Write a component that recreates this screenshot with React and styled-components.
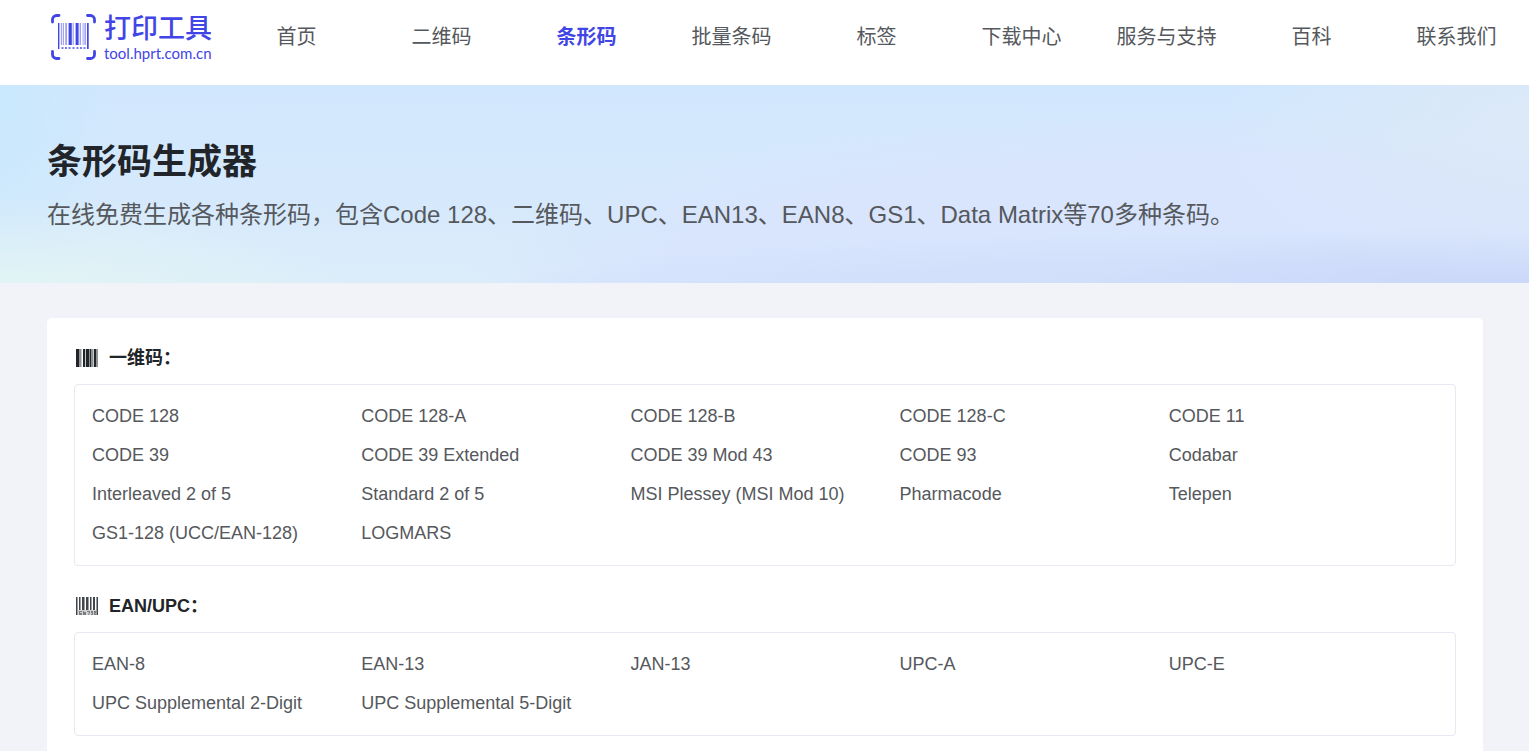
import styled, { createGlobalStyle } from "styled-components";

const NAV = ["首页", "二维码", "条形码", "批量条码", "标签", "下载中心", "服务与支持", "百科", "联系我们"];

const LINEAR = [
    "CODE 128", "CODE 128-A", "CODE 128-B", "CODE 128-C", "CODE 11",
    "CODE 39", "CODE 39 Extended", "CODE 39 Mod 43", "CODE 93", "Codabar",
    "Interleaved 2 of 5", "Standard 2 of 5", "MSI Plessey (MSI Mod 10)", "Pharmacode", "Telepen",
    "GS1-128 (UCC/EAN-128)", "LOGMARS",
];

const EAN = [
    "EAN-8", "EAN-13", "JAN-13", "UPC-A", "UPC-E",
    "UPC Supplemental 2-Digit", "UPC Supplemental 5-Digit",
];

function LogoMark() {
    return (
        <svg width="46" height="46" viewBox="0 0 46 46" fill="none" aria-hidden="true">
            <path
                d="M2.5 8V5.5a4 4 0 0 1 4-4H9M37.5 1.5h3a4 4 0 0 1 4 4V8M44.5 37.5v3a4 4 0 0 1-4 4h-3M9 44.5H6.5a4 4 0 0 1-4-4v-3"
                stroke="#4245e6"
                strokeWidth="2.8"
                strokeLinecap="round"
            />
            <g fill="#4245e6">
                <path d="M8 9h1.4v26H8zM18.6 9h3.2v22h-3.2zM25.6 9h3v22h-3zM37 9h1.7v26H37z" />
                <path
                    d="M10.8 9h1.4v22h-1.4zM13 9h1v22h-1zM15.2 9h1.8v22h-1.8zM22.6 9h1.2v22h-1.2zM29.6 9h1.4v22h-1.4zM32.6 9h1v22h-1zM34.4 9h1.6v22h-1.6z"
                    opacity=".5"
                />
                <path
                    d="M11.5 33h2v2h-2zM15 33h2v2h-2zM18.5 33h2v2h-2zM22.5 33h2v2h-2zM26.5 33h2v2h-2zM30 33h2v2h-2zM33.5 33h2v2h-2z"
                    opacity=".7"
                />
            </g>
        </svg>
    );
}

function LinearIcon() {
    return (
        <svg width="22" height="18" viewBox="0 0 22 18" fill="#212529" aria-hidden="true">
            <path d="M0 0h3v18H0zM7 0h2v18H7zM10 0h3v18h-3zM14 0h1v18h-1zM18 0h2v18h-2z" />
            <path d="M3 0h2v18H3zM13 0h1v18h-1zM15 0h2v18h-2zM20 0h2v18h-2z" opacity=".5" />
            <path d="M5 0h1v18H5zM9 0h1v18H9zM17 0h1v18h-1z" opacity=".25" />
        </svg>
    );
}

function EanIcon() {
    return (
        <svg width="22" height="18" viewBox="0 0 22 18" fill="#212529" aria-hidden="true">
            <path d="M0 0h1v18H0zM3 0h1v13H3zM6 0h2v13H6zM10 0h2v13h-2zM14 0h1v13h-1zM17 0h2v13h-2zM21 0h1v18h-1z" opacity=".85" />
            <path d="M1 0h1v18H1zM4 0h1v13H4zM8 0h1v13H8zM12 0h1v13h-1zM15 0h1v13h-1zM20 0h1v18h-1z" opacity=".45" />
            <path d="M2 13h18v5H2z" opacity=".2" />
            <path
                d="M3 14h3v1H4v1h2v2H3zM7 14h1v1h2v3H7zM11 14h3v1l-1 3h-1l1-3h-2zM15 14h2v4h-2v-1h1v-1h-1zM18 14h2v2l-1 1h1v1h-2z"
                opacity=".5"
            />
        </svg>
    );
}

function CodeSection({ icon, title, items }) {
    return (
        <section>
            <SectionTitle>
                {icon}
                {title}
            </SectionTitle>
            <CodeList>
                {items.map((item) => (
                    <li key={item}>
                        <CodeLink href="#">{item}</CodeLink>
                    </li>
                ))}
            </CodeList>
        </section>
    );
}

export default function App() {
    return (
        <Page lang="zh-CN">
            <GlobalStyle />
            <Header>
                <Logo href="#">
                    <LogoMark />
                    <LogoText>
                        <LogoName>打印工具</LogoName>
                        <LogoDomain>tool.hprt.com.cn</LogoDomain>
                    </LogoText>
                </Logo>
                <Nav>
                    {NAV.map((label) => (
                        <NavLink key={label} href="#" $active={label === "条形码"}>
                            {label}
                        </NavLink>
                    ))}
                </Nav>
            </Header>
            <Hero>
                <h1>条形码生成器</h1>
                <p>在线免费生成各种条形码，包含Code 128、二维码、UPC、EAN13、EAN8、GS1、Data Matrix等70多种条码。</p>
            </Hero>
            <Card>
                <CodeSection icon={<LinearIcon />} title="一维码：" items={LINEAR} />
                <CodeSection icon={<EanIcon />} title="EAN/UPC：" items={EAN} />
            </Card>
        </Page>
    );
}

const GlobalStyle = createGlobalStyle`
    * {
        box-sizing: border-box;
    }
    body {
        margin: 0;
        background-color: #f2f3f9;
        font-family: "Liberation Sans", "Noto Sans CJK SC", sans-serif;
        color: #212529;
    }
    h1, h2, p, ul {
        margin: 0;
        padding: 0;
    }
    a {
        text-decoration: none;
    }
`;

const Page = styled.div`
    min-height: 100vh;
    display: flex;
    flex-direction: column;
`;

const Header = styled.header`
    height: 85px;
    display: flex;
    background-color: white;
`;

const Logo = styled.a`
    width: 224px;
    padding: 14px 0 0 50px;
    display: flex;
    align-items: flex-start;
    gap: 8px;
    color: #4245e6;
`;

const LogoText = styled.span`
    display: flex;
    flex-direction: column;
    white-space: nowrap;
`;

const LogoName = styled.span`
    font-size: 27px;
    line-height: 30px;
    font-weight: 500;
`;

const LogoDomain = styled.span`
    font-family: "Lato", "Liberation Sans", sans-serif;
    font-size: 15px;
    line-height: 18px;
`;

const Nav = styled.nav`
    flex: 1;
    display: grid;
    grid-template-columns: repeat(9, 1fr);
`;

const NavLink = styled.a`
    padding-top: 22px;
    font-size: 20px;
    line-height: 30px;
    text-align: center;
    white-space: nowrap;
    font-weight: ${(props) => (props.$active ? "bold" : "normal")};
    color: ${(props) => (props.$active ? "#4245e6" : "#55585c")};
`;

const Hero = styled.div`
    height: 198px;
    padding: 56px 47px 0;
    background:
        radial-gradient(ellipse 24% 55% at 0% 110%, #e3f5f3 0%, #e3f5f300 100%),
        radial-gradient(ellipse 20% 80% at 100% 20%, #dce9f8 0%, #dce9f800 100%),
        radial-gradient(ellipse 30% 40% at 100% 110%, #c9d5f8 0%, #c9d5f800 100%),
        radial-gradient(ellipse 60% 45% at 80% 112%, #cddcfa 0%, #d3e0fb 50%, #d3e0fb00 85%),
        radial-gradient(ellipse 50% 86% at 80% 100%, #d8e5fd 75%, #d8e5fd00 100%),
        radial-gradient(ellipse 8% 110% at 0% 10%, #cae8fd 0%, #cae8fd00 100%),
        linear-gradient(#d1e7fd, #d6e9fc 60%, #dcedfa);
    h1 {
        font-size: 35px;
        line-height: 42px;
        font-weight: bold;
    }
    p {
        margin-top: 14px;
        font-size: 24px;
        line-height: 36px;
        color: #55585c;
    }
`;

const Card = styled.main`
    flex: 1;
    margin: 35px 46px 0 47px;
    padding: 28px 27px 0;
    display: flex;
    flex-direction: column;
    gap: 28px;
    background-color: white;
    border-radius: 5px 5px 0 0;
`;

const SectionTitle = styled.h2`
    padding-left: 2px;
    margin-bottom: 14px;
    display: flex;
    align-items: center;
    gap: 11px;
    font-size: 18px;
    line-height: 24px;
    font-weight: bold;
`;

const CodeList = styled.ul`
    padding: 12px 17px;
    display: grid;
    grid-template-columns: repeat(5, 1fr);
    list-style: none;
    border: 1px solid #e8e8f2;
    border-radius: 4px;
`;

const CodeLink = styled.a`
    font-size: 18px;
    line-height: 39px;
    color: #55585c;
`;
